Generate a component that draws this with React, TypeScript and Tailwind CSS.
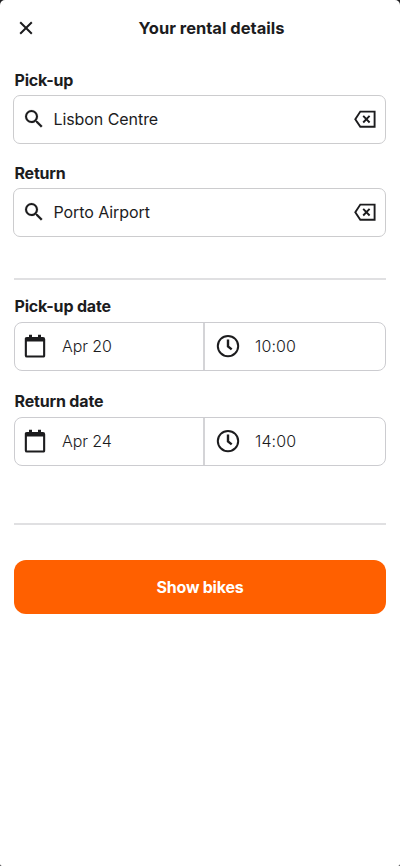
type IconProps = { className?: string };

function CloseIcon() {
  return (
    <svg className="block h-[14px] w-[14px]" viewBox="0 0 14 14" fill="none" stroke="#1c1c1e" strokeWidth="2">
      <path d="M1.2 1.2l11.6 11.6M12.8 1.2L1.2 12.8" />
    </svg>
  );
}

function SearchIcon({ className = "" }: IconProps) {
  return (
    <svg className={`block h-6 w-6 shrink-0 ${className}`} viewBox="0 0 24 24" fill="#1c1c1e" stroke="#1c1c1e" strokeWidth="0.15">
      <path d="M15.5 14h-.79l-.28-.27A6.47 6.47 0 0 0 16 9.5 6.5 6.5 0 1 0 9.5 16c1.61 0 3.09-.59 4.23-1.57l.27.28v.79l5 4.99L20.49 19l-4.99-5zm-6 0C7.01 14 5 11.99 5 9.5S7.01 5 9.5 5 14 7.01 14 9.5 11.99 14 9.5 14z" />
    </svg>
  );
}

function BackspaceIcon() {
  return (
    <svg className="block h-[18px] w-[22px] shrink-0" viewBox="0 -0.4 22 18" fill="none" stroke="#1c1c1e" strokeWidth="1.9">
      <path d="M6.3 1.2H20.6V16.4H6.3L1.3 8.8Z" />
      <path d="M9.2 5.5l6.4 6.6M15.6 5.5l-6.4 6.6" />
    </svg>
  );
}

function CalendarIcon() {
  return (
    <svg className="block h-6 w-[22px] shrink-0" viewBox="0 0 22 24" fill="#1c1c1e">
      <path
        fillRule="evenodd"
        d="M5 .8h3V3h6V.8h3V3h2a2.2 2.2 0 0 1 2.2 2.2v16A2.2 2.2 0 0 1 19 23.6H3a2.2 2.2 0 0 1-2.2-2.2v-16A2.2 2.2 0 0 1 3 3h2zM2.9 7.4v14.2h16.2V7.4z"
      />
    </svg>
  );
}

function ClockIcon() {
  return (
    <svg className="block h-6 w-6 shrink-0" viewBox="0 0 24 24" fill="none" stroke="#1c1c1e">
      <circle cx="12" cy="12.1" r="10.2" strokeWidth="2" />
      <path d="M12 5.5v6.9l3.7 3" strokeWidth="2.4" />
    </svg>
  );
}

function PlaceField({ label, value }: { label: string; value: string }) {
  return (
    <div>
      <h2 className="ml-[1.5px] h-6 text-[16px] leading-6 font-bold tracking-[-0.2px]">{label}</h2>
      <div className="mt-[3px] flex h-[49px] items-center rounded-[7px] border border-[#ccccce] pr-[9px] pb-px pl-[8px]">
        <SearchIcon />
        <span className="ml-[7.4px] flex-1 text-[16px] leading-6 tracking-[-0.06px]">{value}</span>
        <BackspaceIcon />
      </div>
    </div>
  );
}

function DateField({ label, date, time }: { label: string; date: string; time: string }) {
  return (
    <div className="ml-px">
      <h2 className="ml-[0.5px] h-6 text-[16px] leading-6 font-bold tracking-[-0.17px]">{label}</h2>
      <div className="mt-[4px] flex h-[49px] rounded-[8px] border border-[#ccccd0]">
        <div className="flex w-[190px] items-center border-r-2 border-[#d4d4d7] pb-px pl-[9px]">
          <CalendarIcon />
          <span className="ml-[16px] text-[16px] leading-6 font-[350] tracking-[-0.1px]">{date}</span>
        </div>
        <div className="flex flex-1 items-center pb-px pl-[11px]">
          <ClockIcon />
          <span className="ml-[15px] text-[16px] leading-6 font-[350] tracking-[0.1px]">{time}</span>
        </div>
      </div>
    </div>
  );
}

export default function App() {
  return (
    <div className="h-[866px] w-[400px] bg-[#202022]">
      <main className="h-full rounded-t-[5px] rounded-b-[2px] bg-white pr-[14px] pl-[13px] font-['Inter',sans-serif] text-[#1c1c1e]">
        <header className="grid h-14 grid-cols-[28px_1fr_5px] items-center pl-[6px]">
          <button aria-label="Close">
            <CloseIcon />
          </button>
          <h1 className="pr-[5px] text-center text-[16.5px] leading-6 font-bold">Your rental details</h1>
        </header>

        <section className="flex flex-col gap-[17px] pt-[12px]">
          <PlaceField label="Pick-up" value="Lisbon Centre" />
          <PlaceField label="Return" value="Porto Airport" />
        </section>

        <hr className="ml-px mt-[41px] border-t-2 border-[#e0e0e2]" />

        <section className="mt-[14px] flex flex-col gap-[18px]">
          <DateField label="Pick-up date" date="Apr 20" time="10:00" />
          <DateField label="Return date" date="Apr 24" time="14:00" />
        </section>

        <hr className="ml-px mt-[57px] border-t-2 border-[#e0e0e2]" />

        <div className="ml-px mt-[35px]">
          <button className="h-[54px] w-full rounded-[12px] bg-[#ff6000] text-[16px] font-bold tracking-[-0.25px] text-white">
            Show bikes
          </button>
        </div>
      </main>
    </div>
  );
}
